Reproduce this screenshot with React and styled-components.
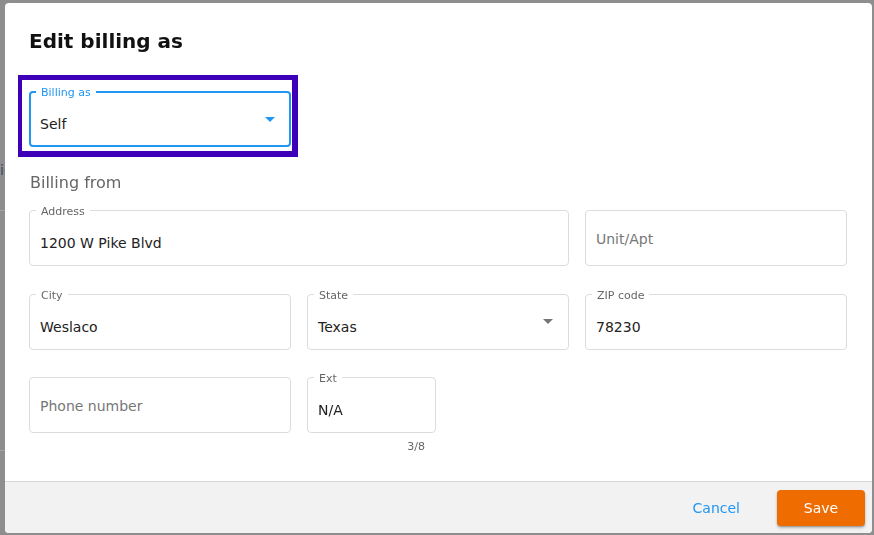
import React from "react";
import styled, { createGlobalStyle } from "styled-components";

const Global = createGlobalStyle`
  html, body { margin: 0; padding: 0; }
  body {
    width: 874px;
    height: 535px;
    overflow: hidden;
    background: #8e8e8e;
    font-family: "DejaVu Sans", Verdana, sans-serif;
  }
`;

const Backdrop = styled.div`
  width: 874px;
  height: 535px;
  display: flex;
  flex-direction: column;
`;

const BackText = styled.div`
  margin-top: 160px;
  margin-left: 0;
  font-size: 14px;
  line-height: 20px;
  color: #3b4a66;
`;

const BackLine = styled.div`
  margin-top: ${(p) => p.$gap}px;
  height: 1px;
  width: 5px;
  background: #a4a4a4;
`;

const Dialog = styled.div`
  position: fixed;
  left: 5px;
  top: 3px;
  width: 867px;
  height: 530px;
  background: #fff;
  border-radius: 4px;
  display: flex;
  flex-direction: column;
  overflow: hidden;
`;

const Body = styled.div`
  flex: 1;
  padding: 26px 25px 0 24px;
  display: flex;
  flex-direction: column;
`;

const Title = styled.h2`
  margin: 0;
  font-size: 20px;
  line-height: 24px;
  font-weight: 700;
  color: #111;
`;

const Highlight = styled.div`
  margin-top: 22px;
  margin-left: -11px;
  width: 280px;
  box-sizing: border-box;
  border-style: solid;
  border-color: #3d00b8;
  border-width: 5px 6px 6px 4px;
  padding: 11px 1px 4px 7px;
`;

const Section = styled.div`
  margin-top: 16px;
  font-size: 16px;
  line-height: 20px;
  color: #666;
  padding-left: 1px;
`;

const Grid = styled.div`
  margin-top: 17px;
  display: grid;
  grid-template-columns: 1fr 1fr 1fr;
  column-gap: 16px;
  row-gap: 27.5px;
`;

const Cell = styled.div`
  grid-column: span ${(p) => p.$span || 1};
  display: flex;
  flex-direction: column;
`;

const Box = styled.div`
  position: relative;
  box-sizing: border-box;
  height: 56px;
  width: ${(p) => p.$width || "100%"};
  border: ${(p) => (p.$focused ? "2px solid #2196f3" : "1px solid #dcdcdc")};
  border-radius: 4px;
  display: flex;
  align-items: center;
  padding: ${(p) => (p.$focused ? "0 14px 0 9px" : "0 15px 0 10px")};
  background: #fff;
`;

const Label = styled.span`
  position: absolute;
  top: ${(p) => (p.$focused ? "-6px" : "-5px")};
  left: ${(p) => (p.$focused ? "5px" : "6px")};
  padding: 0 5px;
  background: #fff;
  font-size: 11px;
  line-height: 12px;
  color: ${(p) => (p.$focused ? "#2196f3" : "#666")};
`;

const Value = styled.span`
  flex: 1;
  padding-top: ${(p) => (p.$placeholder ? "1px" : "10px")};
  font-size: 14px;
  line-height: 18px;
  color: ${(p) => (p.$placeholder ? "#777" : "#222")};
  white-space: nowrap;
`;

const Arrow = styled.svg`
  flex: none;
  width: 10px;
  height: 5px;
`;

const Helper = styled.div`
  width: ${(p) => p.$width};
  box-sizing: border-box;
  margin-top: 7px;
  padding-right: 11px;
  text-align: right;
  font-size: 11px;
  line-height: 14px;
  color: #666;
`;

const Footer = styled.div`
  height: 52px;
  box-sizing: border-box;
  border-top: 1px solid #d6d6d6;
  background: #f2f2f2;
  display: flex;
  align-items: flex-start;
  justify-content: flex-end;
  gap: 21px;
  padding: 8px 7px 0 0;
`;

const TextButton = styled.button`
  height: 36px;
  padding: 0 16px;
  border: none;
  background: transparent;
  font-family: inherit;
  font-size: 14px;
  color: #2196f3;
  cursor: pointer;
`;

const PrimaryButton = styled.button`
  height: 36px;
  width: 88px;
  border: none;
  border-radius: 4px;
  background: #ef6c00;
  color: #fff;
  font-family: inherit;
  font-size: 14px;
  box-shadow: 0 2px 3px rgba(0, 0, 0, 0.25), 0 1px 1px rgba(0, 0, 0, 0.15);
  cursor: pointer;
`;

function Caret({ color }) {
  return (
    <Arrow viewBox="0 0 10 5">
      <path d="M0 0 L10 0 L5 5 Z" fill={color} />
    </Arrow>
  );
}

function Field({ label, value, placeholder, select, focused, width }) {
  return (
    <Box $focused={focused} $width={width}>
      {label && <Label $focused={focused}>{label}</Label>}
      <Value $placeholder={!value}>{value || placeholder}</Value>
      {select && <Caret color={focused ? "#2196f3" : "#757575"} />}
    </Box>
  );
}

export default function App() {
  return (
    <>
      <Global />
      <Backdrop>
        <BackText>ic</BackText>
        <BackLine $gap={30} />
        <BackLine $gap={239} />
      </Backdrop>
      <Dialog>
        <Body>
          <Title>Edit billing as</Title>
          <Highlight>
            <Field label="Billing as" value="Self" select focused />
          </Highlight>
          <Section>Billing from</Section>
          <Grid>
            <Cell $span={2}>
              <Field label="Address" value="1200 W Pike Blvd" />
            </Cell>
            <Cell>
              <Field placeholder="Unit/Apt" />
            </Cell>
            <Cell>
              <Field label="City" value="Weslaco" />
            </Cell>
            <Cell>
              <Field label="State" value="Texas" select />
            </Cell>
            <Cell>
              <Field label="ZIP code" value="78230" />
            </Cell>
            <Cell>
              <Field placeholder="Phone number" />
            </Cell>
            <Cell>
              <Field label="Ext" value="N/A" width="129px" />
              <Helper $width="129px">3/8</Helper>
            </Cell>
          </Grid>
        </Body>
        <Footer>
          <TextButton>Cancel</TextButton>
          <PrimaryButton>Save</PrimaryButton>
        </Footer>
      </Dialog>
    </>
  );
}
